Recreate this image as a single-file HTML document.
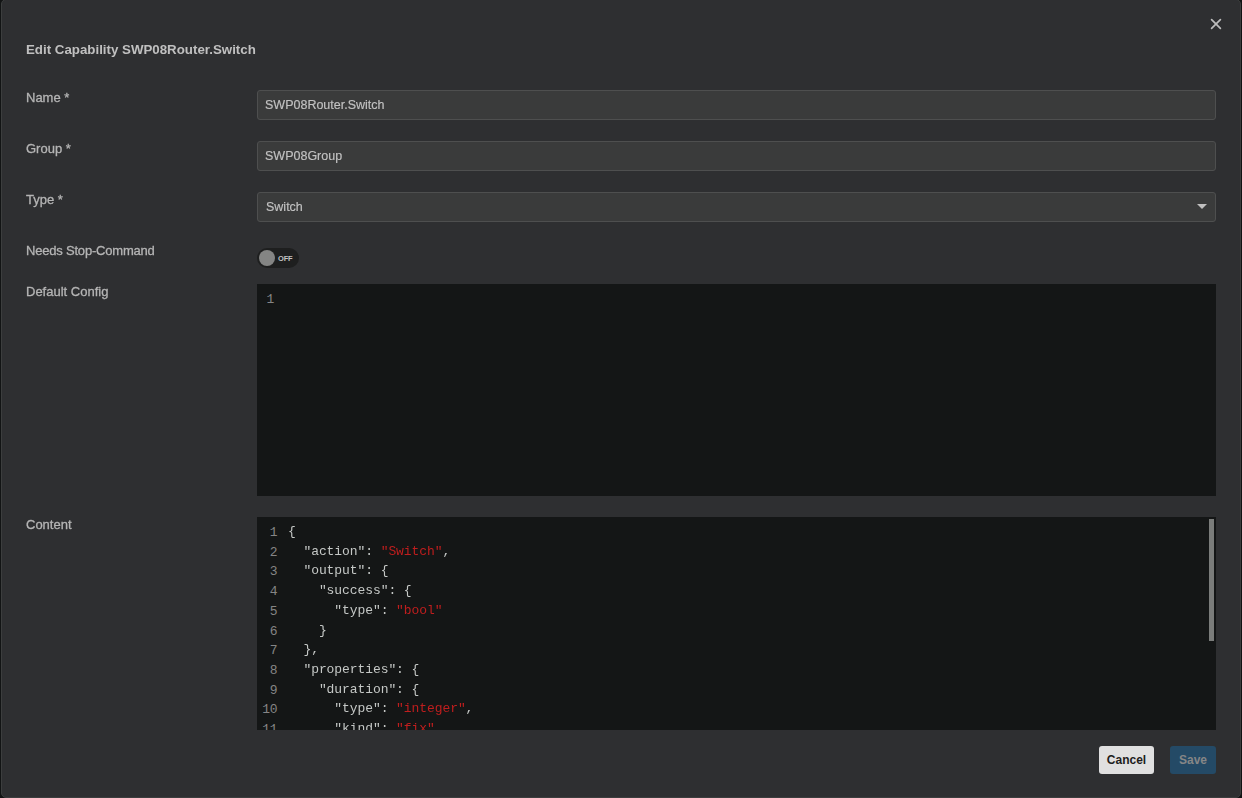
<!DOCTYPE html>
<html><head><meta charset="utf-8">
<style>
*{box-sizing:border-box;margin:0;padding:0}
html,body{width:1242px;height:798px;overflow:hidden;background:#121414;font-family:"Liberation Sans",sans-serif}
.modal{position:absolute;left:1px;top:-1px;width:1240px;height:799px;background:#2e2f31;border:1px solid #3c3e3e;border-radius:5px}
.abs{position:absolute}
.lbl,.title,.inp span,.tx{will-change:transform}
.title{position:absolute;left:26px;top:42px;font-size:13.3px;font-weight:bold;color:#c0c0c0;white-space:nowrap}
.close{position:absolute;left:1210px;top:17.6px;width:12px;height:12px}
.lbl{position:absolute;left:26px;font-size:13px;color:#b5b5b5;white-space:nowrap;-webkit-text-stroke:0.3px #b5b5b5}
.inp{position:absolute;left:257px;width:959px;height:30px;background:#3a3b3b;border:1px solid #4e4f4f;border-radius:3px}
.inp span{position:absolute;left:7px;top:7px;font-size:12.5px;color:#c2c2c2;white-space:nowrap;-webkit-text-stroke:0.15px #c2c2c2}
.arrow{position:absolute;left:939px;top:11px;width:0;height:0;border-left:5px solid transparent;border-right:5px solid transparent;border-top:5px solid #c0c0c0}
.toggle{position:absolute;left:257px;top:248px;width:42px;height:20px;background:#1e1f1f;border-radius:10px}
.knob{position:absolute;left:1.5px;top:2px;width:16px;height:16px;border-radius:50%;background:#848584}
.off{position:absolute;left:21px;top:6px;font-size:7.5px;font-weight:bold;color:#c2c2c2;letter-spacing:-0.2px}
.ed{position:absolute;left:257px;width:959px;background:#141616;overflow:hidden}
.code{position:absolute;left:0;top:6px;font-family:"Liberation Mono",monospace;font-size:13px;line-height:19.6px;letter-spacing:-0.08px;white-space:pre;color:#c5c8c6}
.ln{position:absolute;left:0;width:20.6px;text-align:right;color:#858585}
.tx{position:absolute;left:31px}
.s{color:#c01e1e}
.sb{position:absolute;left:952px;top:2px;width:5px;height:122px;background:#7b7d7b}
.btn{position:absolute;top:746px;height:28px;border-radius:3px;font-size:12px;font-weight:bold;text-align:center;line-height:28px}
.cancel{left:1099px;width:55px;background:#e0e0e0;color:#1d1d1d}
.save{left:1170px;width:46px;background:#244a66;color:#868686}
</style></head>
<body>
<div class="modal"></div>
<div class="title">Edit Capability SWP08Router.Switch</div>
<svg class="close" viewBox="0 0 12 12"><path d="M1.6 1.6L10.4 10.4M10.4 1.6L1.6 10.4" stroke="#bdbdbd" stroke-width="1.7" stroke-linecap="round"/></svg>

<div class="lbl" style="top:90px">Name *</div>
<div class="inp" style="top:90px"><span>SWP08Router.Switch</span></div>

<div class="lbl" style="top:141px">Group *</div>
<div class="inp" style="top:141px"><span>SWP08Group</span></div>

<div class="lbl" style="top:192px">Type *</div>
<div class="inp" style="top:192px"><span style="left:7.6px">Switch</span><div class="arrow"></div></div>

<div class="lbl" style="top:243px;letter-spacing:-0.2px">Needs Stop-Command</div>
<div class="toggle"><div class="knob"></div><div class="off">OFF</div></div>

<div class="lbl" style="top:284px">Default Config</div>
<div class="ed" style="top:284px;height:212px">
  <div class="code"><div class="ln" style="top:0;width:17.3px">1</div></div>
</div>

<div class="lbl" style="top:517px">Content</div>
<div class="ed" style="top:517px;height:213px">
  <div class="code" id="c2">
<div class="ln" style="top:0.0px">1</div><div class="tx" style="top:-1.0px">{</div>
<div class="ln" style="top:19.7px">2</div><div class="tx" style="top:18.7px">  "action": <span class="s">"Switch"</span>,</div>
<div class="ln" style="top:39.4px">3</div><div class="tx" style="top:38.4px">  "output": {</div>
<div class="ln" style="top:59.1px">4</div><div class="tx" style="top:58.1px">    "success": {</div>
<div class="ln" style="top:78.8px">5</div><div class="tx" style="top:77.8px">      "type": <span class="s">"bool"</span></div>
<div class="ln" style="top:98.5px">6</div><div class="tx" style="top:97.5px">    }</div>
<div class="ln" style="top:118.2px">7</div><div class="tx" style="top:117.2px">  },</div>
<div class="ln" style="top:137.9px">8</div><div class="tx" style="top:136.9px">  "properties": {</div>
<div class="ln" style="top:157.6px">9</div><div class="tx" style="top:156.6px">    "duration": {</div>
<div class="ln" style="top:177.3px">10</div><div class="tx" style="top:176.3px">      "type": <span class="s">"integer"</span>,</div>
<div class="ln" style="top:197.0px">11</div><div class="tx" style="top:196.0px">      "kind": <span class="s">"fix"</span>,</div>
</div>
  <div class="sb"></div>
</div>

<div class="btn cancel">Cancel</div>
<div class="btn save">Save</div>
</body></html>
